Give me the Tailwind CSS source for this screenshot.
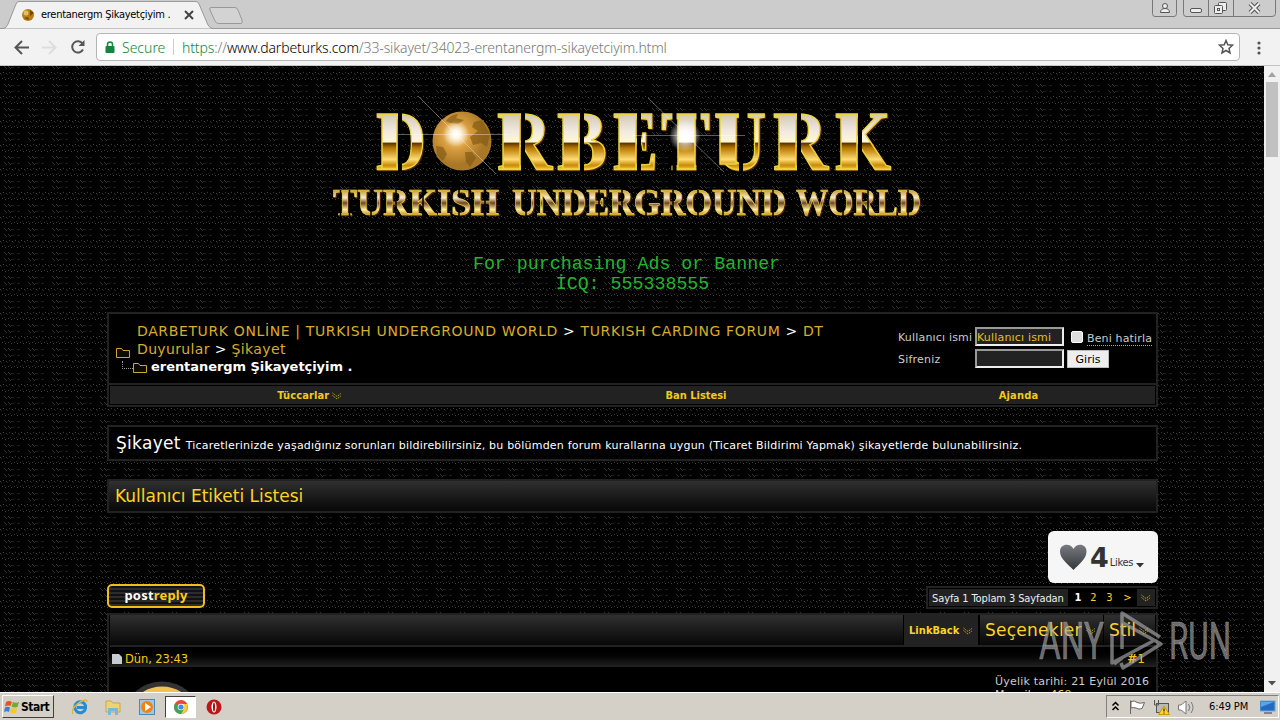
<!DOCTYPE html>
<html lang="tr">
<head>
  <meta charset="UTF-8" />
  <meta name="viewport" content="width=device-width, initial-scale=1" />
  <title>erentanergm Şikayetçiyim .</title>
  <script src="https://cdn.jsdelivr.net/npm/@tailwindcss/browser@4"></script>
</head>
<body class="w-[1280px] h-[720px] overflow-hidden flex flex-col bg-black font-['DejaVu_Sans',sans-serif]">
  <svg class="hidden">
    <symbol id="folder" viewBox="0 0 14 11"><path d="M.5 10.500V1.500H5.500L7 3.500H13.500V10.500Z" fill="#0c0c00" stroke="#c9a82c" /></symbol>
    <symbol id="chev" viewBox="0 0 10 8"><path d="M.5 1L5 4.500L9.500 1M.5 3.500L5 7L9.500 3.500" fill="none" stroke="#c9ab2a" stroke-dasharray="1.300 1" /></symbol>
  </svg>

  <!-- Browser tabs -->
  <header class="h-[66px] shrink-0 flex flex-col bg-[#f2f2f2]">
    <div class="h-[29px] flex justify-between bg-[#cccccc] border-b border-[#999]">
      <div class="relative w-[250px] h-[29px]">
        <svg class="absolute inset-0" width="250" height="29"><path d="M0 28.500H3C6 28 7 26 8 24L16 4Q17 1.500 19 1.500H196Q198 1.500 199 4L208 25Q210 28.500 213 28.500" fill="#f2f2f2" stroke="#999" /><path d="M211 7.500H235Q237 7.500 238 10L242 20Q243 23.500 241 23.500H219Q216 23.500 215 21L210 10Q209 7.500 211 7.500Z" fill="#d3d3d3" stroke="#999" /><circle cx="28" cy="15" r="6" fill="#b77d14" /><circle cx="26" cy="13" r="2.500" fill="#e7bd62" /><path d="M30 10L34 13L30 16ZM24 18L28 17L29 20Z" fill="#734904" /><path d="M185 11L193 19M193 11L185 19" stroke="#444" stroke-width="2" /></svg>
        <span class="absolute left-[41px] top-[7px] text-[11px] leading-[15px] tracking-[-0.28px] whitespace-nowrap font-['DejaVu_Sans_Condensed','DejaVu_Sans',sans-serif]">erentanergm Şikayetçiyim .</span>
      </div>
      <svg width="128" height="28" fill="none" stroke="#777"><path d="M.5 0V13.500Q.5 16.500 3 16.500H22Q24.500 16.500 24.500 13.500V0M31.500 0V13.500Q31.500 16.500 34 16.500H120Q123.500 16.500 123.500 13.500V0M56.500 0V16M81.500 0V16" /><g fill="#eee" stroke="#555"><circle cx="13" cy="6" r="2.500" /><path d="M8.500 12.500Q8.500 8.500 13 8.500T17.500 12.500Z" /><rect x="38.500" y="8.500" width="11" height="4" rx="1.500" /><rect x="66.500" y="2.500" width="8" height="8" rx="1" /><rect x="62.500" y="5.500" width="8" height="8" rx="1" /><rect x="65.500" y="8.500" width="2" height="2" /></g><path d="M98 3.500L107 12.500M107 3.500L98 12.500" stroke="#555" stroke-width="4" /><path d="M98 3.500L107 12.500M107 3.500L98 12.500" stroke="#eee" stroke-width="2" /></svg>
    </div>
    <div class="h-[37px] flex items-center border-b border-[#c4c4c4] pt-px">
      <svg width="96" height="36" fill="none" stroke="#555" stroke-width="2"><path d="M29 17.500H16M22 11L15.500 17.500L22 24" /><path d="M42 17.500H55M49 11L55.500 17.500L49 24" stroke="#ddd" /><path d="M82.500 13.500A5.700 5.700 0 1 0 83 19.500" /><path d="M84.500 10V16H78.500Z" fill="#555" stroke="none" /></svg>
      <div class="w-[1144px] h-7 -mt-px flex items-center bg-white border border-[#b5b5b5] rounded-sm">
        <svg class="ml-2 shrink-0" width="10" height="13"><rect x=".5" y="5" width="9" height="7" rx="1" fill="#148440" /><path d="M2.500 5.500V3.500Q2.500 1 5 1T7.500 3.500V5.500" fill="none" stroke="#148440" stroke-width="1.500" /></svg>
        <span class="ml-[7px] w-[43px] text-[14px] text-[#148440] whitespace-nowrap font-['Noto_Sans',sans-serif] font-light">Secure</span>
        <span class="ml-[8px] h-4 border-l border-[#ccc]"></span>
        <span class="ml-[8px] text-[14px] tracking-[-0.13px] text-[#777] whitespace-nowrap font-['Noto_Sans',sans-serif] font-light"><span class="text-[#148440]">https</span>://<span class="text-black">www.darbeturks.com</span>/33-sikayet/34023-erentanergm-sikayetciyim.html</span>
        <svg class="ml-auto mr-[5px] shrink-0" width="16" height="16"><path d="M8 1.500L9.800 5.800L14.500 6.200L11 9.400L12 14L8 11.500L4 14L5 9.400L1.500 6.200L6.200 5.800Z" fill="none" stroke="#555" stroke-width="1.500" /></svg>
      </div>
      <svg class="ml-[16px]" width="6" height="18" fill="#555"><circle cx="3" cy="4" r="1.600" /><circle cx="3" cy="9" r="1.600" /><circle cx="3" cy="14" r="1.600" /></svg>
    </div>
  </header>

  <div class="relative h-[626px] flex shrink-0 overflow-hidden">
    <svg class="absolute inset-0" width="1264" height="626" shape-rendering="crispEdges">
      <defs>
        <pattern id="weave" width="24" height="24" patternUnits="userSpaceOnUse">
          <rect width="24" height="24" fill="#000" />
          <path d="M0 7.500h1M6 7.500h1M12 7.500h1M18 7.500h1M3 6.500h1M9 6.500h1M15 6.500h1M21 6.500h1M2 12.500h1M8 12.500h1M14 12.500h1M20 12.500h1M5 13.500h1M11 13.500h1M17 13.500h1M23 13.500h1" stroke="#404040" />
          <path d="M1 8.500h1M7 8.500h1M13 8.500h1M19 8.500h1M4 11.500h1M10 11.500h1M16 11.500h1M22 11.500h1M11 1.500h3M17 1.500h3M11 19.500h3M17 19.500h3" stroke="#202020" />
          <path d="M4 0.500h1M5 1.500h1M6 2.500h1M8 0.500h1M9 1.500h1M10 2.500h1M4 18.500h1M5 19.500h1M6 20.500h1M8 18.500h1M9 19.500h1M10 20.500h1" stroke="#333" />
        </pattern>
      </defs>
      <rect width="1264" height="626" fill="url(#weave)" />
    </svg>
    <main class="relative w-[1264px] h-[626px] overflow-hidden pl-[107px] pr-[106px]">
      <!-- Logo -->
      <svg class="ml-[213px] mt-6" width="620" height="140" viewBox="320 90 620 140">
        <defs>
          <linearGradient id="gold" x1="0" y1="113" x2="0" y2="171" gradientUnits="userSpaceOnUse"><stop offset="0" stop-color="#cfc6b4" /><stop offset=".3" stop-color="#f0e8e0" /><stop offset=".5" stop-color="#fff8d8" /><stop offset=".52" stop-color="#5c3300" /><stop offset=".6" stop-color="#b57600" /><stop offset=".8" stop-color="#ffdc75" /><stop offset=".9" stop-color="#c98a08" /><stop offset="1" stop-color="#ffe14e" /></linearGradient>
          <linearGradient id="gold2" x1="0" y1="190" x2="0" y2="216" gradientUnits="userSpaceOnUse"><stop offset="0" stop-color="#c8962a" /><stop offset=".3" stop-color="#f6ead0" /><stop offset=".5" stop-color="#70451c" /><stop offset=".75" stop-color="#ffeea0" /><stop offset="1" stop-color="#b97a08" /></linearGradient>
          <radialGradient id="globe" cx=".4" cy=".4"><stop offset="0" stop-color="#ffdf98" /><stop offset=".5" stop-color="#d69b3d" /><stop offset="1" stop-color="#a87828" /></radialGradient>
          <radialGradient id="flare"><stop offset="0" stop-color="#fff" /><stop offset=".3" stop-color="#fff" stop-opacity=".85" /><stop offset="1" stop-color="#fff" stop-opacity="0" /></radialGradient>
        </defs>
        <g class="drop-shadow-[1px_1px_0_#5a2400]" font-family="Liberation Serif, serif" font-weight="bold" fill="url(#gold)" stroke="#ecd53c" stroke-width="1.500" font-size="84">
          <text x="376" y="169.500" textLength="50" lengthAdjust="spacingAndGlyphs">D</text>
          <text x="497" y="169.500" textLength="55" lengthAdjust="spacingAndGlyphs">R</text>
          <text x="557" y="169.500" textLength="50" lengthAdjust="spacingAndGlyphs">B</text>
          <text x="613" y="169.500" textLength="45" lengthAdjust="spacingAndGlyphs">E</text>
          <text x="661" y="169.500" textLength="49" lengthAdjust="spacingAndGlyphs">T</text>
          <text x="714" y="169.500" textLength="52" lengthAdjust="spacingAndGlyphs">U</text>
          <text x="773" y="169.500" textLength="55" lengthAdjust="spacingAndGlyphs">R</text>
          <text x="835" y="169.500" textLength="56" lengthAdjust="spacingAndGlyphs">K</text>
          <!-- wide stencil stems -->
          <rect x="382" y="115" width="15" height="54" /><rect x="503" y="115" width="17" height="54" /><rect x="563" y="115" width="16" height="54" /><rect x="619" y="115" width="17" height="54" /><rect x="678" y="115" width="17" height="54" /><rect x="720" y="115" width="16" height="49" /><rect x="779" y="115" width="17" height="54" /><rect x="841" y="115" width="16" height="54" />
        </g>
        <path d="M400 110V173M523 110V173M582 110V173M639 110V173M674.500 110V173M698.500 110V173M741 110V173M799 110V173M860 110V173" stroke="#000" stroke-width="4" />
        <circle cx="462" cy="141" r="29.500" fill="url(#globe)" />
        <path d="M446 121Q450 115 458 114L456 118L464 120L458 124L450 123ZM474 122L482 120L490 134L487 147L481 143L473 145L470 137L478 131L472 127ZM436 146L443 147L447 154L443 161L437 155ZM465 152L472 152L476 158L470 167L466 162Z" fill="#805812" opacity=".65" />
        <circle cx="456" cy="134" r="13" fill="url(#flare)" />
        <circle cx="685" cy="136" r="16" fill="url(#flare)" />
        <path d="M418 96L496 174M398 134.500H508M648 98L724 172M632 135.500H745" stroke="#fff" stroke-opacity=".45" stroke-width=".8" />
        <g class="drop-shadow-[1px_1px_0_#5a2400]" font-family="Liberation Serif, serif" font-weight="bold" fill="url(#gold2)" stroke="#f0df4a" stroke-width=".6" font-size="37">
          <text x="333" y="215" textLength="166" lengthAdjust="spacingAndGlyphs">TURKISH</text>
          <text x="512" y="215" textLength="274" lengthAdjust="spacingAndGlyphs">UNDERGROUND</text>
          <text x="796" y="215" textLength="125" lengthAdjust="spacingAndGlyphs">WORLD</text>
        </g>
        <path d="M340.500 190V217M349.500 190V217M371 210V217M396 190V217M423 190V217M459 190V197M459 210V217M485 190V217M526 210V217M573 190V217M599 190V217M622 190V217M646 190V197M646 210V217M673 190V217M698 190V197M698 210V217M723 210V217M773 190V217M843 190V197M843 210V217M868 190V217M908 190V217" stroke="#000" stroke-width="1.500" />
      </svg>
      <div class="mt-[24px] text-center text-[18.3px] leading-[20px] text-[#22b62e] font-['Liberation_Mono',monospace] whitespace-pre"><p class="-ml-[12px]">For purchasing Ads or Banner</p><p>İCQ: 555338555</p></div>

      <!-- Breadcrumb and login -->
      <section class="mt-[18px] w-[1051px] h-[95px] bg-black border-2 border-[#222] flex flex-col">
        <div class="h-[71px] shrink-0 flex justify-between border-b-2 border-[#222]">
          <div class="pt-[8px] pl-[7px] text-[14px] leading-[18px] text-[#d8ad2c]">
            <div class="flex items-end">
              <svg class="mr-[7px]" width="14" height="11"><use href="#folder" /></svg>
              <div class="whitespace-nowrap"><p class="tracking-[0.63px]">DARBETURK ONLİNE | TURKISH UNDERGROUND WORLD <span class="text-white">&gt;</span> TURKISH CARDING FORUM <span class="text-white">&gt;</span> DT</p><p class="tracking-[0.36px]">Duyurular <span class="text-white">&gt;</span> Şikayet</p></div>
            </div>
            <div class="flex items-center pl-[6px]"><span class="w-[11px] h-[8px] -mt-1 border-l border-b border-dotted border-[#999]"></span><svg class="mr-1 mt-px" width="14" height="11"><use href="#folder" /></svg><b class="text-[13px] tracking-[-0.05px] text-white">erentanergm Şikayetçiyim .</b></div>
          </div>
          <div class="w-[258px] pt-[13px] text-[11px] text-[#ccc] flex flex-col gap-[3px]">
            <div class="flex items-center h-[19px]"><span class="w-[77px] mt-[3px] tracking-[0.18px] whitespace-nowrap">Kullanıcı ismi</span><span class="w-[89px] h-[19px] bg-[#222] border-2 border-t-[#999] border-l-[#999] border-r-[#eee] border-b-[#eee] leading-[17px] text-[#e8bd21] tracking-[0.18px] whitespace-nowrap">Kullanıcı ismi</span><span class="ml-[7px] w-[12px] h-[12px] bg-[#ddd] border border-white rounded-xs"></span><span class="ml-1 mt-[5px] leading-[13px] tracking-[0.15px] border-b border-dotted border-[#aaa] whitespace-nowrap">Beni hatirla</span></div>
            <div class="flex items-center h-[19px]"><span class="w-[77px] mt-[3px] tracking-[0.2px]">Sifreniz</span><span class="w-[89px] h-[19px] bg-[#222] border-2 border-t-[#999] border-l-[#999] border-r-[#eee] border-b-[#eee]"></span><span class="ml-[3px] w-[42px] h-[18px] bg-[#eee] border border-[#bbb] text-black text-center leading-[17px]">Giris</span></div>
          </div>
        </div>
        <nav class="h-[20px] bg-[#222] border border-black flex text-[11px] leading-[20px] font-bold text-[#f4c91b] font-['DejaVu_Sans_Condensed','DejaVu_Sans',sans-serif] text-center">
          <span class="w-[399px] tracking-[0.1px]">Tüccarlar <svg class="inline -ml-px" width="10" height="8"><use href="#chev" /></svg></span><span class="w-[374px]">Ban Listesi</span><span class="w-[271px] tracking-[0.2px]">Ajanda</span>
        </nav>
      </section>

      <section class="mt-[18px] w-[1051px] h-[36px] bg-black border-2 border-[#222] flex items-baseline pl-[7px] pt-[4px] text-white whitespace-nowrap"><span class="text-[17px] mr-[5px] tracking-[0.3px]">Şikayet</span><span class="text-[11px] tracking-[0.206px]">Ticaretlerinizde yaşadığınız sorunları bildirebilirsiniz, bu bölümden forum kurallarına uygun (Ticaret Bildirimi Yapmak) şikayetlerde bulunabilirsiniz.</span></section>
      <section class="mt-[18px] w-[1051px] h-[34px] bg-linear-to-b from-[#303030] to-[#080808] border-2 border-[#222] pl-[6px] leading-[31px] text-[17px] text-[#ffd323]"><span>Kullanıcı Etiketi Listesi</span></section>

      <div class="mt-[18px] h-[52px] flex justify-end">
        <div class="w-[110px] h-[52px] rounded-md bg-[#f6f6f6] flex items-center pl-3 text-[#333]">
          <svg width="27" height="27"><defs><linearGradient id="ht" x2="0" y2="1"><stop stop-color="#777b80" /><stop offset="1" stop-color="#34373a" /></linearGradient></defs><path d="M13.500 26C8 20 0 15 0 7.500C0 -1 11 -1 13.500 5C16 -1 26.500 -1 26.500 7.500C26.500 15 19 20 13.500 26Z" fill="url(#ht)" /></svg>
          <b class="ml-[3px] mt-[2px] text-[27px] leading-[52px]">4</b><span class="ml-px mt-[13px] text-[11px] tracking-[-0.3px] font-['DejaVu_Sans_Condensed','DejaVu_Sans',sans-serif]">Likes</span><svg class="ml-[3px] mt-[16px]" width="8" height="5"><path d="M0 0H8L4 4.500Z" fill="#333" /></svg>
        </div>
      </div>
      <div class="mt-px h-[25px] w-[1051px] flex justify-between">
        <div class="w-[98px] h-[24px] rounded-[5px] border-2 border-[#f0bd19] bg-[repeating-linear-gradient(#111_0_2px,#2c2c2c_2px_4px)] text-center text-[13px] leading-[19px] tracking-[0.2px] font-bold text-white font-['Noto_Sans',sans-serif]">post<span class="text-[#fc2]">reply</span></div>
        <div class="mt-[2px] w-[232px] h-[23px] p-px border-2 border-[#222] bg-black flex items-center text-[11px] text-[#ffd323] font-['DejaVu_Sans_Condensed','DejaVu_Sans',sans-serif]"><span class="w-[140px] h-[17px] pl-[3px] bg-[#222] text-[#eee] leading-[19px] tracking-[-0.1px] whitespace-nowrap">Sayfa 1 Toplam 3 Sayfadan</span><b class="ml-[6px] mt-[2px] w-[16px] text-white">1</b><span class="mt-[2px] w-[16px]">2</span><span class="mt-[2px] w-[17px]">3</span><span class="mt-[2px] w-[14px]">&gt;</span><span class="w-[18px] h-[17px] bg-[#222] flex items-center justify-center"><svg width="10" height="8"><use href="#chev" /></svg></span></div>
      </div>

      <section class="mt-[4px] w-[1051px] h-[120px] bg-black border-2 border-[#222]">
        <div class="h-[32px] mx-px flex bg-linear-to-b from-[#303030] to-[#080808] border-b-2 border-[#222] text-[#ffd323]">
          <span class="w-[794px] border-r border-black"></span>
          <span class="w-[76px] h-[30px] pl-[5px] bg-[#222] border-r-2 border-black leading-[31px] text-[11px] font-bold tracking-[0.05px] whitespace-nowrap font-['DejaVu_Sans_Condensed','DejaVu_Sans',sans-serif]">LinkBack <svg class="inline" width="10" height="8"><use href="#chev" /></svg></span>
          <span class="w-[124px] pl-[5px] border-r border-black leading-[31px] text-[17px] tracking-[0.25px] whitespace-nowrap">Seçenekler <svg class="inline -ml-px" width="10" height="8"><use href="#chev" /></svg></span>
          <span class="pl-[5px] leading-[31px] text-[17px] whitespace-nowrap">Stil <svg class="inline -ml-[2px]" width="10" height="8"><use href="#chev" /></svg></span>
        </div>
        <div class="h-[20px] flex items-center bg-linear-to-b from-black to-[#222] pl-[3px] pr-[11px] text-[#f4c91b] text-[11.500px]"><svg class="mt-[4px] mr-[3px]" width="10" height="10"><path d="M0 0H7L10 3V10H0Z" fill="#c8cbd0" /></svg><span class="mt-[5px] tracking-[-0.1px]">Dün, 23:43</span><span class="ml-auto mt-[4px] font-bold text-[12px]">#<span class="font-normal">1</span></span></div>
        <div class="flex justify-between pt-[8px] pr-[7px] text-[11px] leading-[13px] text-[#ccc]">
          <svg class="ml-[13px] mt-[6px]" width="80" height="40"><circle cx="40" cy="41" r="38" fill="#f1c24f" stroke="#333" stroke-width="5" /></svg>
          <div class="w-[154px] tracking-[0.2px] whitespace-nowrap"><p>Üyelik tarihi: 21 Eylül 2016</p><p>Mesajlar: <span class="text-[#f4c91b]">469</span></p></div>
        </div>
      </section>
    </main>
    <!-- Scrollbar -->
    <aside class="relative w-4 h-[626px] bg-[#f1f1f1] flex flex-col items-center"><svg width="16" height="16"><path d="M4 11L8 6L12 11Z" fill="#a3a3a3" /></svg><span class="w-3 h-[75px] bg-[#c1c1c1]"></span><svg class="mt-auto" width="16" height="16"><path d="M4 5H12L8 9.500Z" fill="#505050" /></svg></aside>
    <!-- Watermark -->
    <svg class="absolute left-[1036px] top-[540px]" width="200" height="72" fill="none" stroke="#aaa" stroke-opacity=".65"><g font-family="Roboto, sans-serif" font-size="51" fill="#aaa" fill-opacity=".65" stroke="#aaa" stroke-width=".6"><text x="3" y="53" textLength="65" lengthAdjust="spacingAndGlyphs">ANY</text><text x="133" y="53" textLength="62" lengthAdjust="spacingAndGlyphs">RUN</text></g><path d="M86 43V7L124 31M87 17L125 38L87 62L85 57M76 28V57L117 35M78 58L86 52" stroke-width="3.500" stroke-linejoin="round" /></svg>
  </div>

  <!-- Taskbar -->
  <footer class="h-[28px] shrink-0 bg-[#d4d0c8] border-t border-white flex items-center justify-between font-['DejaVu_Sans_Condensed','DejaVu_Sans',sans-serif]">
    <div class="flex items-center pl-[2px]">
      <div class="w-[52px] h-[23px] flex items-center border border-t-white border-l-white border-r-[#404040] border-b-[#404040] text-[12px] font-bold tracking-[-0.5px]"><svg class="ml-px mr-px" width="16" height="16"><path d="M2 3Q5 1 8 3L6.500 7Q4 6 1 7.500Z" fill="#e65520" /><path d="M9 3Q12 4.500 15 3L13.500 8Q10 9 7.500 7.500Z" fill="#6cae35" /><path d="M1 8.500Q4 7 6 8.500L5 13Q3 11.500 0 13Z" fill="#3a80d3" /><path d="M7 8.500Q10 10 13 9L12 14Q8 15 6 13Z" fill="#f8c52d" /></svg>Start</div>
      <svg class="ml-[18px]" width="16" height="18"><path d="M13.500 11A5.500 5.500 0 1 1 13.500 7.500V9.500H5" fill="none" stroke="#268bd2" stroke-width="3" /><path d="M1 16Q-2 11 8 4Q15 0 15 4" fill="none" stroke="#e5b530" stroke-width="1.500" /></svg>
      <svg class="ml-[17px]" width="16" height="18"><path d="M1 3H6L8 5H15V14H1Z" fill="#eed36f" stroke="#c6a74a" /><path d="M3 17V10H13V17H10V13H6V17Z" fill="#75b9df" /></svg>
      <svg class="ml-[18px]" width="16" height="18"><rect x=".5" y="1.500" width="15" height="15" fill="#9ac9ec" stroke="#4988bd" /><circle cx="8" cy="9" r="6" fill="#ef8215" /><path d="M6 5L12 9L6 13Z" fill="#fff" /></svg>
      <div class="ml-[10px] w-[31px] h-[22px] bg-white border border-t-[#404040] border-l-[#404040] border-r-white border-b-white flex justify-center items-center"><svg width="14" height="14"><circle cx="7" cy="7" r="7" fill="#e54a3c" /><path d="M7 7L1 3.500A7 7 0 0 0 7 14L10 9Z" fill="#39a556" /><path d="M7 14A7 7 0 0 0 13 4H7L10 9Z" fill="#f7cd34" /><circle cx="7" cy="7" r="3.300" fill="#fff" /><circle cx="7" cy="7" r="2.600" fill="#4486ec" /></svg></div>
      <svg class="ml-[10px]" width="16" height="16"><circle cx="8" cy="8" r="7.500" fill="#bd1616" /><ellipse cx="8" cy="8" rx="2.500" ry="5.500" fill="#fff" /><ellipse cx="8" cy="8" rx="1" ry="4.500" fill="#a00d0d" /></svg>
    </div>
    <div class="w-[173px] h-[23px] mr-px flex items-center border border-t-[#808080] border-l-[#808080] border-r-white border-b-white text-[11px] tracking-[-0.1px]">
      <svg width="90" height="20" fill="none" stroke="#000"><path d="M5.500 8.500L8.500 5.500L11.500 8.500M5.500 13L8.500 10L11.500 13" stroke-width="1.500" /><path d="M23.500 17V3.500" stroke="#666" /><path d="M24 4.500Q28 3 30 5.500Q33 7 37.500 5.500L35 11.500Q32 13 29 11Q26 10 24 11Z" fill="#fff" stroke="#666" /><rect x="49.500" y="6.500" width="12" height="9" fill="#bbb" stroke="#555" /><path d="M47.500 3V8H51.500V3M49.500 8V15" stroke="#555" /><path d="M57 9L62.500 17.500H51.500Z" fill="#ffd52a" stroke="#c79a00" /><path d="M57 11.500V14.500M57 15.500V16.500" /><path d="M71.500 8V13H74L79 17V4L74 8Z" fill="#fff" stroke="#777" /><path d="M81.500 7Q84 10.500 81.500 14M84 5Q88 10.500 84 16" stroke="#777" /></svg>
      <span class="ml-[12px] mt-[2px] w-[44px] whitespace-nowrap">6:49 PM</span>
      <svg class="ml-[7px]" width="16" height="14"><rect y="1" width="15" height="10" fill="#236bc0" stroke="#6da7da" /><path d="M1 2H14L1 7Z" fill="#5ba2e6" /><path d="M4 13H12" stroke="#335" /></svg>
    </div>
  </footer>
</body>
</html>
